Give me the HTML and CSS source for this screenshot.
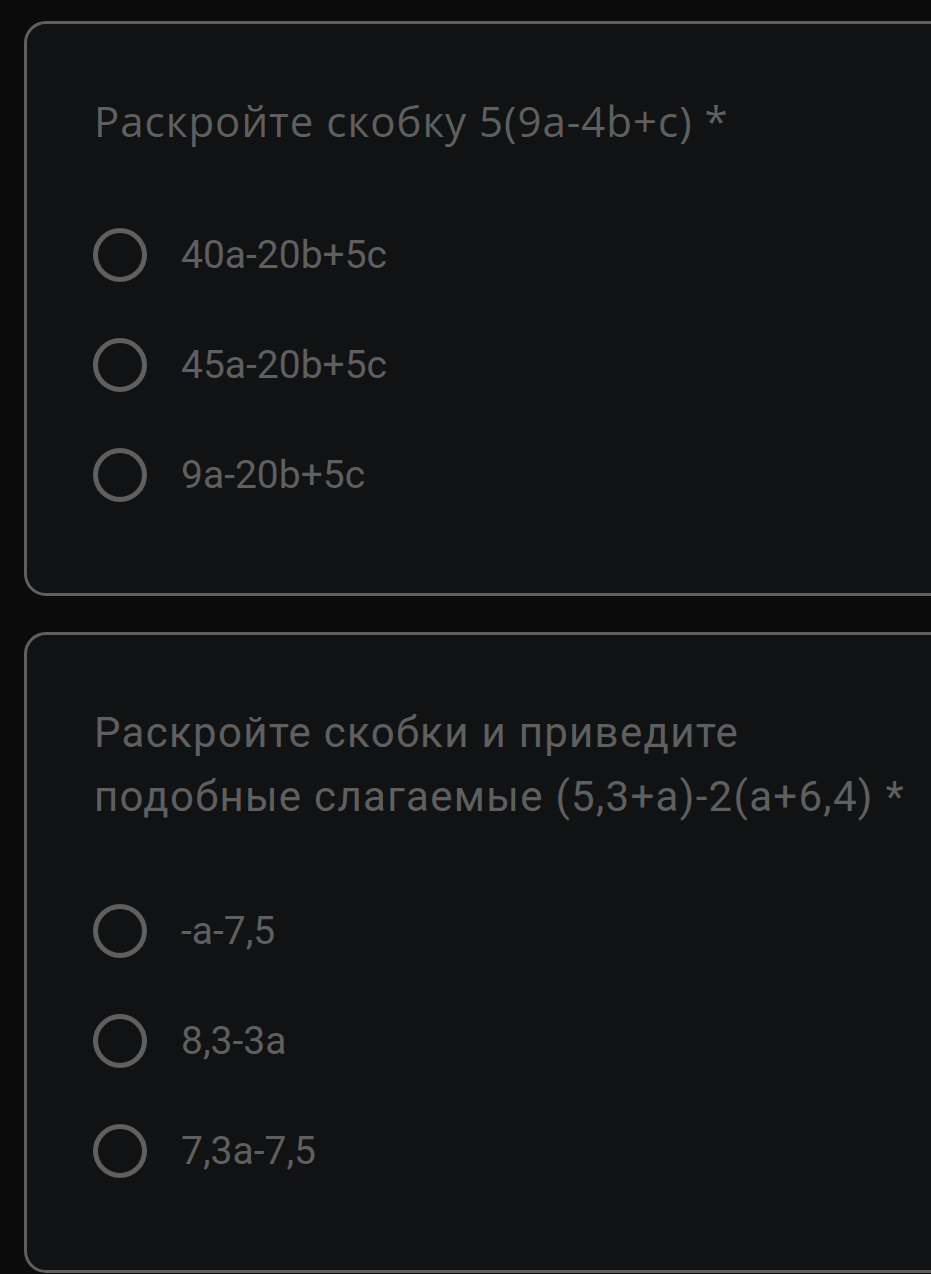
FILE: index.html
```html
<!DOCTYPE html>
<html lang="ru">
<head>
<meta charset="utf-8">
<link rel="stylesheet" href="styles.css">
</head>
<body>
<main class="page">
  <section class="card">
    <h2 class="title title-a">Раскройте скобку 5(9а-4b+c) *</h2>
    <ul class="options">
      <li class="option"><span class="radio"></span><span class="label">40a-20b+5c</span></li>
      <li class="option"><span class="radio"></span><span class="label">45a-20b+5c</span></li>
      <li class="option"><span class="radio"></span><span class="label">9a-20b+5c</span></li>
    </ul>
  </section>
  <section class="card card-second">
    <h2 class="title title-b">Раскройте скобки и приведите<br>подобные слагаемые (5,3+a)-2(a+6,4) *</h2>
    <ul class="options">
      <li class="option"><span class="radio"></span><span class="label">-a-7,5</span></li>
      <li class="option"><span class="radio"></span><span class="label">8,3-3a</span></li>
      <li class="option"><span class="radio"></span><span class="label">7,3a-7,5</span></li>
    </ul>
  </section>
</main>
</body>
</html>
```
FILE: styles.css
```css
html, body {
  margin: 0;
  padding: 0;
  background: #0b0b0b;
  overflow: hidden;
}
.page {
  display: flex;
  flex-direction: column;
  gap: 36px;
  padding: 21px 0 0 24px;
}
.card {
  width: 960px;
  box-sizing: border-box;
  background: #111214;
  border: 3px solid #5f5f5f;
  border-radius: 22px;
  padding: 65px 0 63px 67px;
}
.card-second {
  padding-top: 66px;
  padding-bottom: 64px;
}
.title {
  margin: 0;
  font-weight: 400;
  color: #5f5f5f;
  line-height: 64px;
  white-space: nowrap;
}
.title-a {
  font-family: "Open Sans", sans-serif;
  font-size: 42px;
  letter-spacing: 1px;
}
.title-b {
  font-family: Roboto, sans-serif;
  font-size: 42px;
  letter-spacing: 1.3px;
}
.options {
  list-style: none;
  margin: 47px 0 0 0;
  padding: 0;
}
.option {
  display: flex;
  align-items: center;
  height: 110px;
  gap: 34px;
}
.radio {
  width: 54px;
  height: 54px;
  box-sizing: border-box;
  border: 5px solid #5f5f5f;
  border-radius: 50%;
  margin-left: -1px;
  flex: none;
}
.label {
  font-family: Roboto, sans-serif;
  font-size: 39px;
  color: #5f5f5f;
}
```
